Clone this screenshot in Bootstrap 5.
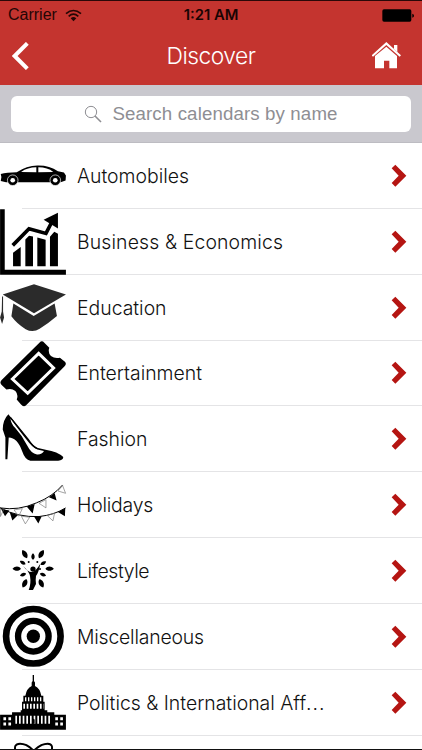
<!DOCTYPE html>
<html lang="en">
<head>
<meta charset="utf-8">
<meta name="viewport" content="width=device-width, initial-scale=1">
<title>Discover</title>
<link href="https://cdn.jsdelivr.net/npm/bootstrap@5.3.0/dist/css/bootstrap.min.css" rel="stylesheet">
<style>
body{font-family:Inter,"Liberation Sans",sans-serif;color:#111;background:#fff}
.screen{width:422px;height:750px;border-top:1px solid #2a0808;border-bottom:1px solid #111}
.topbar{height:84px;background:#c4342f}
.status{height:28px;font:16px/28px "Liberation Sans",sans-serif;color:#240605}
.side{width:130px}
.clock{font-weight:600;font-size:14.8px;font-family:Inter,sans-serif;color:#180403}
.nav-row{height:54px}
.heading{font-weight:300;font-size:22.8px;letter-spacing:-.5px;line-height:54px;color:#fff}
.searchbar{height:58px;background:#c9c8ce;padding:11px 11px 10px;border-bottom:1px solid #bdbcc2}
.field{border-radius:6px;font:18.7px/36px "Liberation Sans",sans-serif;color:#8e8e93;letter-spacing:.12px}
.lens{margin-right:10px}
.entry{height:65.85px;z-index:0}
.pic{width:66px;height:65.85px;overflow:visible}
.caption{margin-left:11px;font-weight:300;font-size:19.4px;letter-spacing:0;line-height:64px}
.caption.wide{letter-spacing:.14px}
.caption.snug{letter-spacing:-.2px}
.caption.tight{letter-spacing:-.4px}
.dots{letter-spacing:1px}
.entry::after{content:"";position:absolute;left:22px;right:0;bottom:0;height:1px;background:#e4e4e6;z-index:-1}
.go{width:16px;height:24px;margin-right:15px}
</style>
<script src="https://cdn.jsdelivr.net/npm/bootstrap@5.3.0/dist/js/bootstrap.bundle.min.js"></script>
</head>
<body class="overflow-hidden">
<svg width="0" height="0" class="position-absolute"><defs>
<symbol id="chev" viewBox="0 0 48 72"><path d="M2 13L13 2L46 35L13 68L2 57L23 35Z" fill="#b51512"/></symbol>
<path id="leaf" d="M0-14C10-5 9 8 0 14C-9 8-10-5 0-14Z"/>
</defs></svg>
<main class="screen overflow-hidden d-flex flex-column">
<header class="topbar flex-shrink-0">
 <div class="status d-flex justify-content-between">
  <div class="side d-flex align-items-center ps-2"><span>Carrier</span>
   <svg class="ms-2" width="17" height="13" viewBox="0 0 51 39"><g fill="none" stroke="#240605" stroke-width="5"><path d="M3 14Q25-5 48 14M11 22Q25 9 40 22"/></g><path d="M17 28Q25 20 34 28L25.500 37Z" fill="#240605"/></svg></div>
  <div class="clock">1:21 AM</div>
  <div class="side d-flex justify-content-end align-items-center pe-2"><svg width="32" height="13" viewBox="0 0 96 39"><rect x="1" y="1" width="87" height="37" rx="5"/><path d="M91 14q5 1 5 6t-5 6z"/></svg></div>
 </div>
 <div class="nav-row d-flex justify-content-between align-items-center">
  <div class="side ps-2"><svg class="d-block ms-1" width="17" height="28" viewBox="2 0 51 84"><path d="M48 4L10 42L48 80" fill="none" stroke="#fff" stroke-width="12"/></svg></div>
  <div class="heading">Discover</div>
  <div class="side d-flex justify-content-end pe-3"><svg class="me-1" width="30" height="28" viewBox="2 2 90 84"><g fill="#fff"><path d="M45 2L89 42L85 46L45 11L5 46L1 42Z"/><path d="M68 11h10v21L68 23z"/><path d="M45 16L77 44V81H54V58H38V81H11V44Z"/></g></svg></div>
 </div>
</header>
<div class="searchbar flex-shrink-0"><div class="field bg-white d-flex justify-content-center align-items-center h-100">
 <svg class="lens" width="18" height="18" viewBox="0 0 54 54"><circle cx="21" cy="21" r="17" fill="none" stroke="#8e8e93" stroke-width="3"/><path d="M33 33L51 51" stroke="#8e8e93" stroke-width="5"/></svg><span>Search calendars by name</span></div></div>
<div class="flex-grow-1 overflow-hidden">
 <div class="entry position-relative d-flex align-items-center"><svg class="pic" viewBox="0 3 198 198"><path d="M2 96Q20 91 50 91Q80 72 112 71Q148 70 174 88L192 92L198 101L197 116L182 121H18L2 117L4 105Z"/><path d="M63 90Q83 76 109 76V91ZM115 76Q143 76 160 90L115 91Z" fill="#fff"/><g stroke="#fff" stroke-width="2"><circle cx="38" cy="115" r="16"/><circle cx="166" cy="115" r="16"/></g><circle cx="38" cy="115" r="7" fill="#fff"/><circle cx="166" cy="115" r="7" fill="#fff"/></svg><span class="caption">Automobiles</span><svg class="go ms-auto"><use href="#chev"/></svg></div>
 <div class="entry position-relative d-flex align-items-center"><svg class="pic" viewBox="0 8.600 198 198"><path d="M0 9H14V191H198V206H0ZM39 140L62 123V181H39ZM76 100L87 89L99 91V181H76ZM112 94L137 101V181H112ZM150 92L163 77L174 83V181H150Z"/><path d="M38 118L87 68L138 82L156 47" fill="none" stroke="#000" stroke-width="11"/><path d="M131 41L174 20V67Z"/></svg><span class="caption wide">Business &amp; Economics</span><svg class="go ms-auto"><use href="#chev"/></svg></div>
 <div class="entry position-relative d-flex align-items-center"><svg class="pic" viewBox="0 2 198 198"><g fill="#2b2b2b"><path d="M8 61L102 30L198 61L102 117Z"/><path d="M40 88L101 125L164 88L171 125Q145 147 119 164Q98 177 77 165Q51 149 34 126Z"/><path d="M6 67H9V112L12 130L6 149L0 130L5 112Z"/></g></svg><span class="caption">Education</span><svg class="go ms-auto"><use href="#chev"/></svg></div>
 <div class="entry position-relative d-flex align-items-center"><svg class="pic" viewBox="0 7.800 198 198"><path d="M4 126L119 12Q126 5 133 13L148 28Q143 43 153 53Q165 62 180 58L195 70Q201 77 194 84L79 200Q71 208 63 199L50 184Q56 169 46 158Q34 149 19 154L4 139Q-2 133 4 126Z"/><path d="M37 122L116 45L161 89L83 165Z" fill="none" stroke="#fff" stroke-width="9"/></svg><span class="caption">Entertainment</span><svg class="go ms-auto"><use href="#chev"/></svg></div>
 <div class="entry position-relative d-flex align-items-center"><svg class="pic" viewBox="0 1.500 198 198"><path d="M25 26Q8 43 8 72L16 96V162H22L26 96Q52 96 67 139Q75 163 91 166H175Q190 165 190 155Q174 139 137 133L111 127Q96 119 81 97Z"/><path d="M31 38Q45 58 78 101Q99 129 112 132L132 137Q126 148 111 147Q93 144 82 121Q68 92 45 67Q33 55 31 38Z" fill="#fff"/><path d="M31 36L84 101Q98 123 111 129" fill="none" stroke="#000" stroke-width="4"/></svg><span class="caption">Fashion</span><svg class="go ms-auto"><use href="#chev"/></svg></div>
 <div class="entry position-relative d-flex align-items-center"><svg class="pic" viewBox="0 1 198 198"><path d="M0 109Q55 118 109 94Q158 75 188 40M0 109Q55 138 117 135Q164 130 197 109" fill="none" stroke="#000" stroke-width="3"/><path d="M3 112L28 117L15 134ZM80 105L104 97L98 126ZM147 77L164 64L170 87ZM29 122L54 130L37 147ZM102 135L125 135L115 156ZM174 121L196 110L195 134Z"/><g fill="none" stroke="#777" stroke-width="2"><path d="M42 115L67 111L56 134ZM117 95L138 84L138 109ZM174 58L188 42L197 65ZM64 134L89 137L76 157ZM142 132L164 124L159 148ZM1 110V135L11 113"/></g></svg><span class="caption snug">Holidays</span><svg class="go ms-auto"><use href="#chev"/></svg></div>
 <div class="entry position-relative d-flex align-items-center"><svg class="pic" viewBox="0 6.600 198 198"><path d="M69 91Q84 110 95 109Q107 108 121 84Q116 111 108 121Q106 135 108 145L99 163H86Q94 144 90 121Q87 107 69 91Z"/><circle cx="99" cy="100" r="8"/><use href="#leaf" transform="translate(74 55) rotate(-30)"/><use href="#leaf" transform="translate(124 55) rotate(30)"/><use href="#leaf" transform="translate(99 62) scale(.7)"/><use href="#leaf" transform="translate(50 99) rotate(-90) scale(.9)"/><use href="#leaf" transform="translate(149 99) rotate(90) scale(.9)"/><use href="#leaf" transform="translate(68 81) rotate(-60) scale(.7)"/><use href="#leaf" transform="translate(130 82) rotate(60) scale(.7)"/><use href="#leaf" transform="translate(69 117) rotate(-110) scale(.7)"/><use href="#leaf" transform="translate(129 117) rotate(110) scale(.7)"/><use href="#leaf" transform="translate(74 143) rotate(205)"/><use href="#leaf" transform="translate(124 143) rotate(155)"/><g><circle cx="86" cy="79" r="3"/><circle cx="112" cy="79" r="3"/><circle cx="120" cy="100" r="3"/></g></svg><span class="caption tight">Lifestyle</span><svg class="go ms-auto"><use href="#chev"/></svg></div>
 <div class="entry position-relative d-flex align-items-center"><svg class="pic" viewBox="0 12 198 198"><g fill="none" stroke="#000"><circle cx="100" cy="109" r="82" stroke-width="20"/><circle cx="100" cy="109" r="46" stroke-width="19"/></g><circle cx="100" cy="109" r="20"/></svg><span class="caption snug">Miscellaneous</span><svg class="go ms-auto"><use href="#chev"/></svg></div>
 <div class="entry position-relative d-flex align-items-center"><svg class="pic" viewBox="0 209.700 198 198"><path d="M98 225H102V243L105 247V258Q120 265 124 287H130V305H134V331H142V337H163V344H198V389H0V344H36V337H62V331H66V305H70V287H76Q80 265 95 258V247L98 243Z"/><g fill="none" stroke="#fff"><path d="M75 298H127" stroke-width="12" stroke-dasharray="4 5"/><path d="M70 319H131" stroke-width="15" stroke-dasharray="5 5"/><path d="M46 359H154" stroke-width="24" stroke-dasharray="5 6"/><path d="M10 356H34M166 356H190M10 372H34M166 372H190" stroke-width="9" stroke-dasharray="8 7"/></g><path d="M96 371V359Q100 353 104 359V371Z"/></svg><span class="caption">Politics &amp; International Aff<span class="dots">...</span></span><svg class="go ms-auto"><use href="#chev"/></svg></div>
 <div class="entry position-relative d-flex align-items-center"><svg class="pic" viewBox="0 407 198 198"><path d="M48 458Q38 430 60 430Q82 430 101 452Q122 430 143 430Q163 430 153 458M80 460L101 450L122 460" fill="none" stroke="#000" stroke-width="6"/></svg></div>
</div>
</main>
</body>
</html>
